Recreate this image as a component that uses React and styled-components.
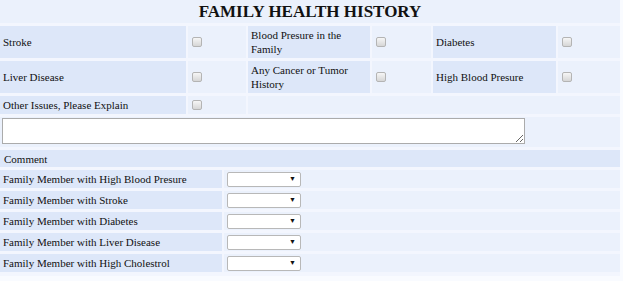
import React from "react";
import styled, { createGlobalStyle } from "styled-components";

const GlobalStyle = createGlobalStyle`
  body {
    margin: 0;
    background: #f9fbff;
    font-family: "Liberation Serif", "Times New Roman", serif;
    color: #111;
  }
`;

const Form = styled.div`
  width: 620px;
  background: #f3f6fe;
  display: flex;
  flex-direction: column;
  gap: 3px;
  padding-bottom: 4px;
  font-size: 11px;
  line-height: 14px;
`;

const Title = styled.h2`
  margin: 0;
  height: 23px;
  line-height: 24px;
  background: #ebf1fc;
  text-align: center;
  font-size: 17px;
  font-weight: bold;
`;

const CheckRow = styled.div`
  display: grid;
  grid-template-columns: 186px 58px 122px 59px 123px 62px;
  column-gap: 2px;
`;

const SelectRow = styled.div`
  display: grid;
  grid-template-columns: 222px 1fr;
  column-gap: 2px;
`;

const Cell = styled.div`
  display: flex;
  align-items: center;
  padding: ${p => p.$pad || "2px 3px"};
  min-height: 14px;
  background: ${p => (p.$label ? "#dde7f9" : "#ebf1fc")};
  grid-column: ${p => p.$span || "auto"};
`;

const Wide = styled.div`
  background: ${p => (p.$label ? "#dde7f9" : "#ebf1fc")};
  padding: ${p => p.$pad || "2px 4px 1px"};
`;

const Check = styled.input.attrs({ type: "checkbox" })`
  appearance: none;
  width: 10px;
  height: 10px;
  margin: 0 0 0 1px;
  border: 1px solid #b4b4b4;
  border-radius: 2px;
  background: linear-gradient(#f6f6f6, #d6d6d6);
  box-sizing: border-box;
`;

const Box = styled.textarea`
  display: block;
  width: 523px;
  height: 26px;
  box-sizing: border-box;
  border: 1px solid #ababab;
  background: #fff;
  margin: 0;
`;

const SelectWrap = styled.div`
  position: relative;
  width: 74px;
  height: 15px;
  &::after {
    content: "▼";
    position: absolute;
    right: 5px;
    top: 3px;
    font-size: 7px;
    line-height: 8px;
    color: #111;
    pointer-events: none;
  }
`;

const Select = styled.select`
  appearance: none;
  width: 100%;
  height: 100%;
  margin: 0;
  border: 1px solid #b8b8b8;
  border-radius: 2px;
  background: #fff;
  box-sizing: border-box;
`;

const conditions = [
  ["Stroke", "Blood Presure in the Family", "Diabetes"],
  ["Liver Disease", "Any Cancer or Tumor History", "High Blood Presure"]
];

const members = [
  "Family Member with High Blood Presure",
  "Family Member with Stroke",
  "Family Member with Diabetes",
  "Family Member with Liver Disease",
  "Family Member with High Cholestrol"
];

export default function App() {
  return (
    <>
      <GlobalStyle />
      <Form>
        <Title>FAMILY HEALTH HISTORY</Title>
        {conditions.map((row, i) => (
          <CheckRow key={i}>
            {row.map(name => (
              <React.Fragment key={name}>
                <Cell $label>{name}</Cell>
                <Cell>
                  <Check />
                </Cell>
              </React.Fragment>
            ))}
          </CheckRow>
        ))}
        <CheckRow>
          <Cell $label>Other Issues, Please Explain</Cell>
          <Cell>
            <Check />
          </Cell>
          <Cell $span="3 / 7" />
        </CheckRow>
        <Wide $pad="1px 2px 3px">
          <Box />
        </Wide>
        <Wide $label>Comment</Wide>
        {members.map(m => (
          <SelectRow key={m}>
            <Cell $label>{m}</Cell>
            <Cell $pad="1px 3px">
              <SelectWrap>
                <Select>
                  <option></option>
                </Select>
              </SelectWrap>
            </Cell>
          </SelectRow>
        ))}
      </Form>
    </>
  );
}
